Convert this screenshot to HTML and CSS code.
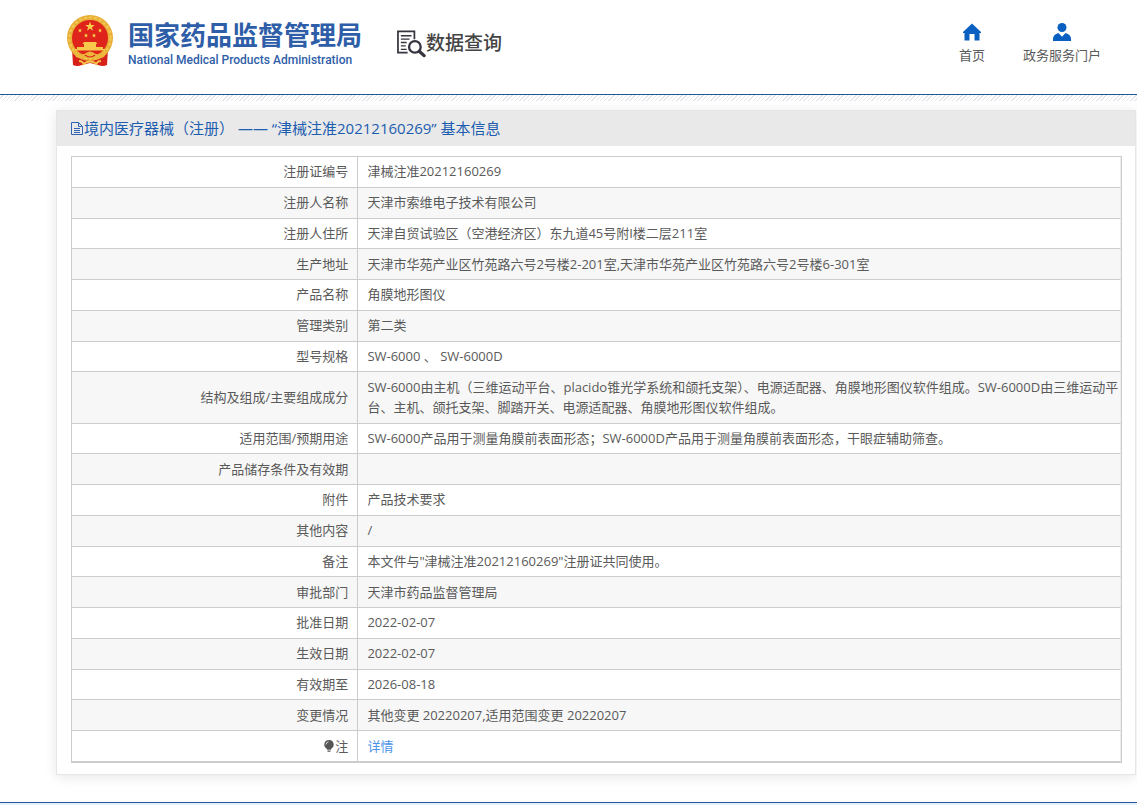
FILE: index.html
```html
<!DOCTYPE html>
<html lang="zh-CN">
<head>
  <meta charset="UTF-8">
  <meta name="viewport" content="width=device-width, initial-scale=1">
  <title>国家药品监督管理局 数据查询</title>
  <link rel="stylesheet" href="styles.css">
</head>
<body>

<!-- 页头 -->
<header class="header">
  <a href="#" class="logo">
    <svg class="emblem" viewBox="0 0 46 52" aria-hidden="true">
      <path d="M5 34 L41 34 L40 50 Q36 52 31 50 L23 48 L15 50 Q10 52 6 50 Z" fill="#d8201a"/>
      <circle cx="23" cy="23" r="23" fill="#e8ae35"/>
      <circle cx="23" cy="23" r="20.5" fill="none" stroke="#f3c955" stroke-width="2" stroke-dasharray="3 2"/>
      <circle cx="23" cy="23" r="18" fill="#de241b"/>
      <path d="M23 6.5 L24.2 10 H27.8 L24.9 12.2 L26 15.7 L23 13.6 L20 15.7 L21.1 12.2 L18.2 10 H21.8 Z" fill="#f7cf4a"/>
      <g fill="#f7cf4a">
        <path id="star" d="M13 13.2 l.6 1.6 h1.6 l-1.3 1 .5 1.6 -1.4 -1 -1.4 1 .5 -1.6 -1.3 -1 h1.6 Z"/>
        <use href="#star" x="20"/>
        <use href="#star" x="6" y="5"/>
        <use href="#star" x="14" y="5"/>
      </g>
      <path d="M17 27 h12 l1.5 2 h-1.5 v3 h7 v2 h2 v1.5 H8 V34 h2 v-2 h7 v-3 h-1.5 Z" fill="#f7c84a"/>
      <path d="M5 35 Q14 42 19 38 Q23 35 27 38 Q32 42 41 35 L37 42 Q30 45 23 41 Q16 45 9 42 Z" fill="#ecb53c"/>
      <path d="M18 40 q5 4 10 0" fill="none" stroke="#de241b" stroke-width="1.2"/>
      <path d="M12 46 q4 0 5 4 M34 46 q-4 0 -5 4 M17 48.5 q6 -4 12 0" fill="none" stroke="#f3c24a" stroke-width="2"/>
    </svg>
    <span class="logo-text">
      <span class="logo-cn">国家药品监督管理局</span>
      <span class="logo-en">National Medical Products Administration</span>
    </span>
  </a>
  <a href="#" class="query">
    <svg width="29" height="28" viewBox="0 0 30 28" fill="none" stroke="#35353f" aria-hidden="true">
      <path d="M18 9 V1 H1 V23 H11" stroke-width="1.8"/>
      <path d="M4 5.5 h11 M4 9 h9 M4 12.5 h6 M4 16 h5 M4 19.5 h6" stroke-width="1.4"/>
      <circle cx="18.5" cy="17" r="6" stroke-width="2.4"/>
      <path d="M23 21.5 L28 26" stroke-width="3.4" stroke-linecap="round"/>
    </svg>
    <span>数据查询</span>
  </a>
  <nav class="nav">
    <a href="#">
      <svg width="18" height="18" viewBox="0 0 18 18" aria-hidden="true"><path d="M9 .5 L18 9 V10 H16.5 V17.500 H11.5 V11 H6.5 V17.500 H1.500 V10 H0 V9 Z" fill="#0a60c0"/></svg>
      <span>首页</span>
    </a>
    <a href="#">
      <svg width="18" height="18" viewBox="0 0 18 18" aria-hidden="true"><circle cx="9" cy="4.5" r="4.5" fill="#0a60c0"/><path d="M0 18 V16 Q0 11.5 5.5 10 L9 13.8 L12.5 10 Q18 11.5 18 16 V18 Z" fill="#0a60c0"/></svg>
      <span>政务服务门户</span>
    </a>
  </nav>
</header>
<div class="hatch"></div>

<!-- 详情 -->
<main class="card">
  <h1 class="card-title">
    <svg width="12" height="13" viewBox="0 0 12 13" fill="none" stroke="#2f63b5" aria-hidden="true">
      <path d="M1 .5 H7.5 L11.5 4.5 V12.5 H.5 V.5 Z M7.5 .5 V4.5 H11.5 M3 6.5 H9 M3 8.5 H9 M3 10.5 H9"/>
    </svg>
    <span>境内医疗器械（注册） —— “津械注准20212160269” 基本信息</span>
  </h1>
  <div class="card-body">
    <table class="info">
      <tbody>
        <tr><th scope="row">注册证编号</th><td>津械注准20212160269</td></tr>
        <tr><th scope="row">注册人名称</th><td>天津市索维电子技术有限公司</td></tr>
        <tr><th scope="row">注册人住所</th><td>天津自贸试验区（空港经济区）东九道45号附I楼二层211室</td></tr>
        <tr><th scope="row">生产地址</th><td>天津市华苑产业区竹苑路六号2号楼2-201室,天津市华苑产业区竹苑路六号2号楼6-301室</td></tr>
        <tr><th scope="row">产品名称</th><td>角膜地形图仪</td></tr>
        <tr><th scope="row">管理类别</th><td>第二类</td></tr>
        <tr><th scope="row">型号规格</th><td>SW-6000 、 SW-6000D</td></tr>
        <tr><th scope="row">结构及组成/主要组成成分</th><td>SW-6000由主机（三维运动平台、placido锥光学系统和颌托支架）、电源适配器、角膜地形图仪软件组成。SW-6000D由三维运动平台、主机、颌托支架、脚踏开关、电源适配器、角膜地形图仪软件组成。</td></tr>
        <tr><th scope="row">适用范围/预期用途</th><td>SW-6000产品用于测量角膜前表面形态；SW-6000D产品用于测量角膜前表面形态，干眼症辅助筛查。</td></tr>
        <tr><th scope="row">产品储存条件及有效期</th><td></td></tr>
        <tr><th scope="row">附件</th><td>产品技术要求</td></tr>
        <tr><th scope="row">其他内容</th><td>/</td></tr>
        <tr><th scope="row">备注</th><td>本文件与"津械注准20212160269"注册证共同使用。</td></tr>
        <tr><th scope="row">审批部门</th><td>天津市药品监督管理局</td></tr>
        <tr><th scope="row">批准日期</th><td>2022-02-07</td></tr>
        <tr><th scope="row">生效日期</th><td>2022-02-07</td></tr>
        <tr><th scope="row">有效期至</th><td>2026-08-18</td></tr>
        <tr><th scope="row">变更情况</th><td>其他变更 20220207,适用范围变更 20220207</td></tr>
        <tr>
          <th scope="row"><svg class="bulb" width="10" height="12" viewBox="0 0 10 12" aria-hidden="true"><path d="M5 0 A4.6 4.6 0 0 1 7.5 8.5 L6.8 9.8 H3.2 L2.5 8.5 A4.6 4.6 0 0 1 5 0 Z M3.5 10.6 H6.5 V11.8 H3.5 Z" fill="#555"/><path d="M2 4.5 Q2.2 2.2 4.5 1.8" fill="none" stroke="#fff" stroke-width=".8"/></svg>注</th>
          <td><a href="#">详情</a></td>
        </tr>
      </tbody>
    </table>
  </div>
</main>

<footer class="footer"></footer>

</body>
</html>
```
FILE: styles.css
```css
:root {
  --blue: #1c5db0;
  --line: #ccc;
  --text: #5a5a5a;
}
* {
  box-sizing: border-box;
  margin: 0;
  padding: 0;
}
body {
  min-height: 100vh;
  display: flex;
  flex-direction: column;
  background: #fff;
  color: var(--text);
  font-family: "Open Sans", "Noto Sans CJK SC", sans-serif;
  font-size: 13px;
  line-height: 20px;
}
a {
  color: inherit;
  text-decoration: none;
}
svg {
  flex: none;
}

/* 页头 */
.header {
  display: flex;
  align-items: flex-start;
  padding: 15px 36px 0 67px;
  height: 95px;
  border-bottom: 1px solid #22579a;
}
.logo {
  display: flex;
  gap: 15px;
  color: #2f5ea8;
}
.emblem {
  width: 46px;
  height: 52px;
}
.logo-text {
  display: flex;
  flex-direction: column;
  gap: 2px;
  padding-top: 3px;
}
.logo-cn {
  font: bold 26px/32px "Noto Sans CJK SC", sans-serif;
}
.logo-en {
  font: 500 12px/16px Roboto, sans-serif;
}
.query {
  display: flex;
  align-items: center;
  margin: 14px 0 0 35px;
  color: #444;
  font-size: 19px;
  font-weight: 500;
  line-height: 28px;
}
.query span {
  padding-bottom: 2px;
}
.nav {
  display: flex;
  gap: 38px;
  margin-left: auto;
  padding-top: 8px;
}
.nav a {
  display: flex;
  flex-direction: column;
  align-items: center;
  gap: 4px;
}
.hatch {
  height: 6px;
  background: repeating-linear-gradient(135deg, #fff 0 2px, #e4e6e9 2px 3px);
}

/* 详情卡片 */
.card {
  flex: 1;
  display: flex;
  flex-direction: column;
  margin: 9px 1px 27px 56px;
  border: 1px solid #e6e6e6;
  box-shadow: 0 2px 12px rgba(0, 0, 0, .1);
}
.card-title {
  display: flex;
  align-items: center;
  gap: 1px;
  padding: 0 14px;
  height: 35px;
  background: #e9e9e9;
  color: var(--blue);
  font-size: 15px;
  font-weight: normal;
}
.card-title span {
  padding-bottom: 2px;
}
.card-body {
  flex: 1;
  display: flex;
  flex-direction: column;
  padding: 10px 13px 11px 14px;
}
.info {
  flex: 1;
  width: 100%;
  border: 1px solid var(--line);
  border-collapse: separate;
  border-spacing: 0;
}
.info th,
.info td {
  padding: 4px 9px 5px;
  border-bottom: 1px solid var(--line);
  font-weight: normal;
}
.info th {
  width: 27.3%;
  border-right: 1px solid var(--line);
  text-align: right;
}
.info td {
  padding-right: 0;
  border-right: 1px solid #eee;
}
.info tr:nth-child(even) {
  background: #f7f7f7;
}
.info a {
  color: #4c94e8;
}
.bulb {
  margin-right: 1px;
  vertical-align: -1px;
}

.footer {
  height: 3px;
  border-top: 1px solid #22579a;
  background: #e4effa;
}
```
